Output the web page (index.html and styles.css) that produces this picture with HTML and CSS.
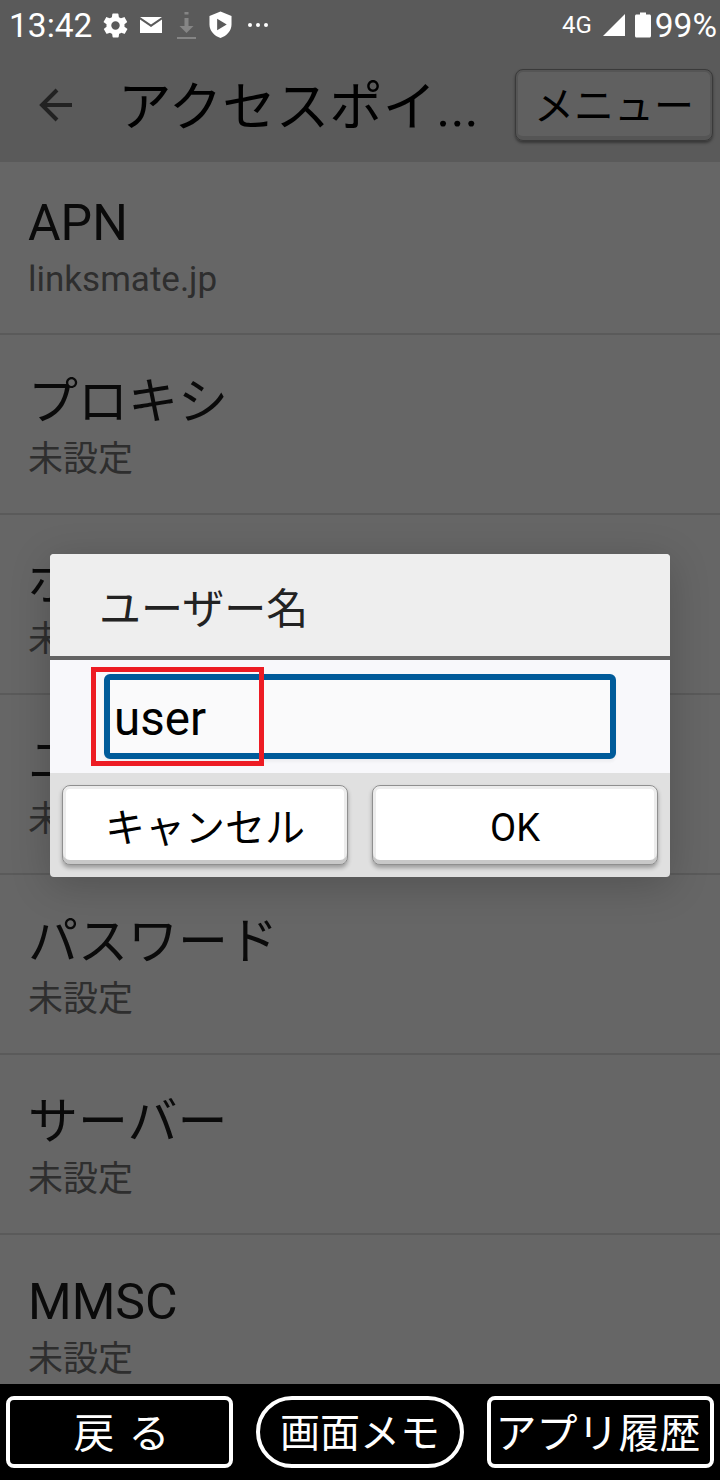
FILE: index.html
```html
<!DOCTYPE html>
<html lang="ja">
<head>
    <meta charset="UTF-8">
    <meta name="viewport" content="width=device-width, initial-scale=1.0">
    <title>アクセスポイント</title>
    <link rel="stylesheet" href="styles.css">
</head>
<body>
    <div class="phone">
        <div class="status-bar">
            <span class="clock">13:42</span>
            <svg class="st-gear" width="29" height="29" viewBox="0 0 24 24"><path fill="#fff" d="M19.4 13a7.500 7.500 0 0 0 0-2l2.100-1.600c.2-.2.2-.4.1-.6l-2-3.500c-.1-.2-.4-.3-.6-.2l-2.500 1a7.300 7.300 0 0 0-1.700-1l-.4-2.700c0-.2-.2-.4-.5-.4h-4c-.2 0-.4.2-.5.4l-.4 2.700a7.300 7.300 0 0 0-1.700 1l-2.500-1c-.2-.1-.5 0-.6.2l-2 3.500c-.1.2-.1.4.1.6L4.600 11a7.500 7.500 0 0 0 0 2l-2.100 1.600c-.2.2-.2.4-.1.6l2 3.500c.1.2.4.3.6.2l2.500-1c.5.4 1.100.7 1.700 1l.4 2.700c0 .2.2.4.5.4h4c.2 0 .4-.2.5-.4l.4-2.700c.6-.3 1.200-.6 1.700-1l2.500 1c.2.1.5 0 .6-.2l2-3.500c.1-.2.1-.4-.1-.6zM12 15.500a3.500 3.500 0 1 1 0-7 3.500 3.500 0 0 1 0 7z"/></svg>
            <svg class="st-mail" width="22" height="16" viewBox="0 0 22 16"><path fill="#fff" d="M0 0h22L11 7.500zM0 2.500l11 7.500 11-7.500V16H0z"/></svg>
            <svg class="st-down" width="19" height="27" viewBox="0 0 19 27"><path fill="#858585" d="M7.500 0h4v2.500h-4zM7.500 6h4v8h5l-7 7-7-7h5zM0 25h19v2H0z"/></svg>
            <svg class="st-shield" width="23" height="28" viewBox="0 0 24 28"><path fill="#fff" fill-rule="evenodd" d="M12 0l11.500 4.500v9c0 6.500-5 12-11.500 14C5.500 25.500.5 20 .5 13.500v-9zM8.500 7.500v12l10-6z"/></svg>
            <span class="st-more">
                <i></i><i></i><i></i>
            </span>
            <span class="st-right">
                <span class="net">4G</span>
                <svg class="st-signal" width="22" height="22" viewBox="0 0 22 22"><path fill="#fff" d="M22 0v22H0z"/></svg>
                <svg class="st-batt" width="16" height="26" viewBox="0 0 16 25"><path fill="#fff" d="M5 0h6v2h3.500c.8 0 1.500.7 1.500 1.500v20c0 .8-.7 1.500-1.500 1.500h-13C.7 25 0 24.300 0 23.500v-20C0 2.700.7 2 1.500 2H5z"/></svg>
                <span class="pct">99%</span>
            </span>
        </div>

        <div class="app-bar">
            <svg class="back" width="34" height="34" viewBox="0 0 34 34"><path fill="none" stroke="#222" stroke-width="4" d="M33 17H4M18 2 3 17l15 15"/></svg>
            <div class="app-title">アクセスポイ...</div>
            <button class="menu-btn">メニュー</button>
        </div>

        <div class="list">
            <div class="row"><div class="row-title">APN</div><div class="row-sub">linksmate.jp</div></div>
            <div class="row"><div class="row-title">プロキシ</div><div class="row-sub">未設定</div></div>
            <div class="row"><div class="row-title">ポート</div><div class="row-sub">未設定</div></div>
            <div class="row"><div class="row-title">ユーザー名</div><div class="row-sub">未設定</div></div>
            <div class="row"><div class="row-title">パスワード</div><div class="row-sub">未設定</div></div>
            <div class="row"><div class="row-title">サーバー</div><div class="row-sub">未設定</div></div>
            <div class="row"><div class="row-title">MMSC</div><div class="row-sub">未設定</div></div>
        </div>

        <div class="nav-bar">
            <button class="nav-btn nav-back">戻る</button>
            <button class="nav-btn nav-memo">画面メモ</button>
            <button class="nav-btn nav-hist">アプリ履歴</button>
        </div>

        <div class="dialog">
            <div class="dialog-title">ユーザー名</div>
            <div class="dialog-body">
                <div class="text-input">user</div>
            </div>
            <div class="dialog-actions">
                <button class="dlg-btn">キャンセル</button>
                <button class="dlg-btn dlg-ok">OK</button>
            </div>
        </div>
        <div class="red-mark"></div>
    </div>
</body>
</html>
```

FILE: styles.css
```css
* {
    box-sizing: border-box;
}

body {
    margin: 0;
    background-color: #000;
    font-family: Roboto, 'Noto Sans CJK JP', sans-serif;
}

.phone {
    position: relative;
    width: 720px;
    height: 1480px;
    display: flex;
    flex-direction: column;
    overflow: hidden;
    background-color: #666;
}

.status-bar {
    height: 48px;
    padding: 2px 3px 0 9px;
    background-color: #5a5a5a;
    display: flex;
    align-items: center;
    color: #fff;
}

.clock {
    font-size: 33.5px;
    margin-right: 9px;
}

.st-mail {
    margin-left: 10px;
}

.st-down {
    margin-left: 15px;
}

.st-shield {
    margin-left: 13px;
}

.st-more {
    display: flex;
    gap: 4px;
    margin-left: 16px;
}

.st-more i {
    width: 4px;
    height: 4px;
    border-radius: 50%;
    background-color: #fff;
}

.st-right {
    margin-left: auto;
    display: flex;
    align-items: center;
}

.net {
    font-size: 24px;
}

.st-signal {
    margin-left: 11px;
}

.st-batt {
    margin-left: 10px;
}

.pct {
    font-size: 33.5px;
    margin-left: 4px;
}

.app-bar {
    height: 114px;
    background-color: #5a5a5a;
    display: flex;
    align-items: center;
    padding: 0 7px 0 39px;
}

.back {
    flex: none;
}

.app-title {
    font-size: 53.5px;
    color: #000;
    margin: 0 0 6px 45px;
    white-space: nowrap;
}

.menu-btn {
    margin-left: auto;
    width: 198px;
    height: 72px;
    font-family: inherit;
    font-size: 40px;
    color: #000;
    background-color: #606060;
    border: 3px solid #555;
    border-bottom-width: 5px;
    outline: 1px solid #3a3a3a;
    outline-offset: -1px;
    border-radius: 8px;
    padding: 0 0 3px;
    box-shadow: 0 2px 3px rgba(0, 0, 0, 0.4);
}

.list {
    flex: 1;
    overflow: hidden;
}

.row {
    height: 180px;
    padding: 32px 28px 0;
    border-bottom: 2px solid #5a5a5a;
}

.row:first-child {
    height: 173px;
    padding-top: 26px;
}

.row:first-child .row-title {
    line-height: 70px;
}

.row-title {
    font-size: 50px;
    line-height: 71px;
    color: #0a0a0a;
}

.row-sub {
    font-size: 35px;
    line-height: 44px;
    color: #2e2e2e;
}

.nav-bar {
    height: 96px;
    background-color: #000;
    display: flex;
    align-items: center;
    padding: 0 6px;
    gap: 23px;
}

.nav-btn {
    height: 72px;
    background: none;
    border: 4px solid #fff;
    border-radius: 8px;
    color: #fff;
    font-family: inherit;
    font-size: 41px;
    padding: 0 0 5px;
    white-space: nowrap;
}

.nav-back {
    width: 227px;
    letter-spacing: 14px;
    padding-left: 18px;
}

.nav-memo {
    width: 208px;
    border-radius: 36px;
    font-size: 40px;
}

.nav-hist {
    width: 227px;
    padding-right: 5px;
}

.dialog {
    position: absolute;
    left: 50px;
    top: 554px;
    width: 620px;
    height: 323px;
    border-radius: 4px;
    overflow: hidden;
    display: flex;
    flex-direction: column;
    background-color: #e0e0e0;
    box-shadow: 0 8px 40px rgba(0, 0, 0, 0.2);
}

.dialog-title {
    height: 106px;
    padding: 21px 0 0 49px;
    font-size: 42px;
    color: #222;
    background-color: #eee;
    border-bottom: 4px solid #636363;
}

.dialog-body {
    height: 113px;
    padding: 14px 54px 0;
    background-color: #f8f8fb;
}

.text-input {
    height: 85px;
    border: 6px solid #005b9a;
    border-radius: 6px;
    padding-left: 4px;
    font-size: 47.5px;
    line-height: 79px;
    color: #000;
    background-color: #fafafb;
    box-shadow: 0 3px 3px rgba(0, 0, 0, 0.04);
}

.dialog-actions {
    flex: 1;
    display: flex;
    justify-content: space-between;
    padding: 12px 12px 0;
}

.dlg-btn {
    width: 286px;
    height: 80px;
    background-color: #fff;
    border: 1px solid #8f8f8f;
    border-radius: 8px;
    font-family: 'Noto Sans CJK JP', sans-serif;
    font-size: 40px;
    color: #000;
    padding: 0;
    box-shadow: inset 0 -4px 0 #c8c8c8, inset 0 0 0 3px #ececec, 0 3px 4px rgba(0, 0, 0, 0.3);
}

.dlg-ok {
    font-family: Roboto, sans-serif;
    font-size: 38px;
    padding-top: 5px;
}

.red-mark {
    position: absolute;
    left: 91px;
    top: 667px;
    width: 173px;
    height: 99px;
    border: 5px solid #ed1c24;
}
```
